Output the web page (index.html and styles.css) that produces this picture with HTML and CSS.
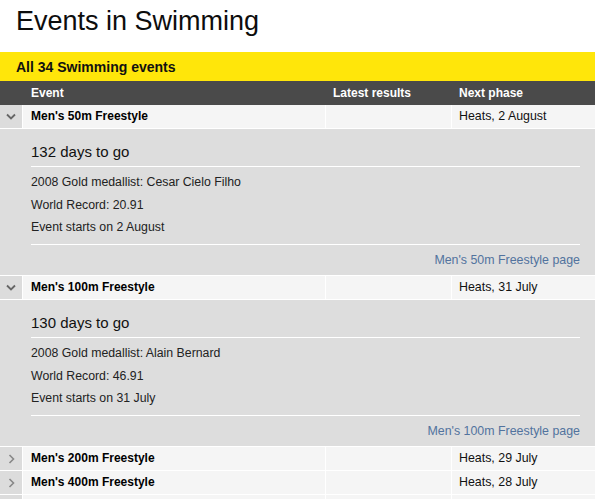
FILE: index.html
```html
<!DOCTYPE html>
<html>
<head>
<meta charset="utf-8">
<link rel="stylesheet" href="styles.css">
</head>
<body>
<h1 class="title">Events in Swimming</h1>
<div class="bar">All 34 Swimming events</div>
<div class="events">
  <div class="row head">
    <div class="cell toggle"></div>
    <div class="cell event">Event</div>
    <div class="cell latest">Latest results</div>
    <div class="cell next">Next phase</div>
  </div>

  <div class="row">
    <div class="cell toggle"><svg width="10" height="7" viewBox="0 0 10 7"><path d="M1 1.5 L5 5.5 L9 1.5" fill="none" stroke="#666" stroke-width="1.8"/></svg></div>
    <div class="cell event name">Men's 50m Freestyle</div>
    <div class="cell latest"></div>
    <div class="cell next">Heats, 2 August</div>
  </div>
  <div class="panel">
    <div class="countdown">132 days to go</div>
    <ul class="facts">
      <li>2008 Gold medallist: Cesar Cielo Filho</li>
      <li>World Record: 20.91</li>
      <li>Event starts on 2 August</li>
    </ul>
    <div class="more"><a href="#">Men's 50m Freestyle page</a></div>
  </div>

  <div class="row">
    <div class="cell toggle"><svg width="10" height="7" viewBox="0 0 10 7"><path d="M1 1.5 L5 5.5 L9 1.5" fill="none" stroke="#666" stroke-width="1.8"/></svg></div>
    <div class="cell event name">Men's 100m Freestyle</div>
    <div class="cell latest"></div>
    <div class="cell next">Heats, 31 July</div>
  </div>
  <div class="panel">
    <div class="countdown">130 days to go</div>
    <ul class="facts">
      <li>2008 Gold medallist: Alain Bernard</li>
      <li>World Record: 46.91</li>
      <li>Event starts on 31 July</li>
    </ul>
    <div class="more"><a href="#">Men's 100m Freestyle page</a></div>
  </div>

  <div class="row">
    <div class="cell toggle"><svg width="7" height="10" viewBox="0 0 7 10"><path d="M1.5 1 L5.5 5 L1.5 9" fill="none" stroke="#888" stroke-width="1.6"/></svg></div>
    <div class="cell event name">Men's 200m Freestyle</div>
    <div class="cell latest"></div>
    <div class="cell next">Heats, 29 July</div>
  </div>
  <div class="row">
    <div class="cell toggle"><svg width="7" height="10" viewBox="0 0 7 10"><path d="M1.5 1 L5.5 5 L1.5 9" fill="none" stroke="#888" stroke-width="1.6"/></svg></div>
    <div class="cell event name">Men's 400m Freestyle</div>
    <div class="cell latest"></div>
    <div class="cell next">Heats, 28 July</div>
  </div>
  <div class="row">
    <div class="cell toggle"></div>
    <div class="cell event name"></div>
    <div class="cell latest"></div>
    <div class="cell next"></div>
  </div>
</div>
</body>
</html>
```
FILE: styles.css
```css
html, body {
  margin: 0;
  padding: 0;
  background: #fff;
  font-family: "Liberation Sans", Arial, Helvetica, sans-serif;
  color: #111;
  overflow: hidden;
}

.title {
  margin: 0;
  padding: 5px 0 0 16px;
  height: 52px;
  box-sizing: border-box;
  font-size: 27px;
  line-height: 32px;
  font-weight: normal;
  color: #0d0d0d;
}

.bar {
  background: #ffe60a;
  height: 29px;
  line-height: 30px;
  padding-left: 16px;
  font-size: 14px;
  font-weight: bold;
  color: #111;
}

.row {
  display: flex;
  height: 23px;
  border-bottom: 1px solid #fff;
  background: #f5f5f5;
  font-size: 12.4px;
  line-height: 23px;
}

.row.head {
  background: #4a4a4a;
  color: #fff;
  font-weight: bold;
  border-bottom: 0;
  height: 24px;
  line-height: 24px;
  font-size: 12px;
}

.cell {
  box-sizing: border-box;
  border-right: 1px solid #fff;
  padding-left: 8px;
  white-space: nowrap;
}

.head .cell {
  border-right-color: #4a4a4a;
}

.cell.toggle {
  width: 23px;
  padding: 0;
  background: #dcdcdc;
  display: flex;
  align-items: center;
  justify-content: center;
}

.head .cell.toggle {
  background: #4a4a4a;
}

.cell.event { width: 303px; }
.cell.latest { width: 126px; padding-left: 7px; }
.cell.next { flex: 1; border-right: 0; padding-left: 7px; }

.name { font-weight: bold; color: #000; font-size: 12px; }

.panel {
  background: #dddddd;
  padding: 0 15px 0 31px;
  border-bottom: 1px solid #fff;
  height: 147px;
  box-sizing: border-box;
}

.countdown {
  padding-top: 13px;
  font-size: 15px;
  line-height: 20px;
  padding-bottom: 4px;
  border-bottom: 1px solid #fff;
  color: #111;
}

.facts {
  list-style: none;
  margin: 0;
  padding: 4px 0 5px;
  border-bottom: 1px solid #fff;
  font-size: 12.3px;
  line-height: 22.5px;
  color: #222;
}

.more {
  text-align: right;
  padding-top: 6px;
  font-size: 12.4px;
  line-height: 18px;
}

.more a {
  color: #52739e;
  text-decoration: none;
}
```
